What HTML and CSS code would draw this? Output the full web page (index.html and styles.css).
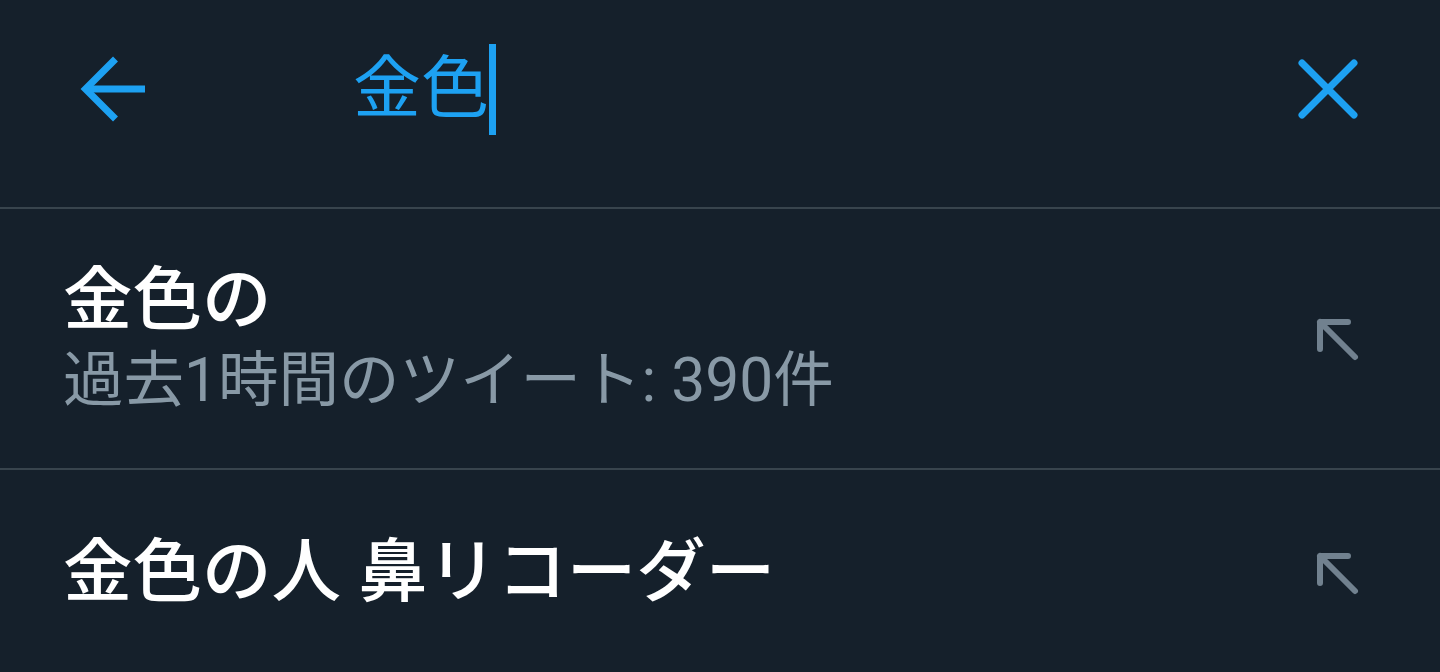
FILE: index.html
```html
<!DOCTYPE html>
<html lang="ja">
<head>
    <meta charset="UTF-8">
    <meta name="viewport" content="width=device-width, initial-scale=1.0">
    <title>検索</title>
    <link rel="stylesheet" href="styles.css">
</head>
<body>
    <header class="search-bar">
        <svg class="icon back" viewBox="0 0 72 72" aria-label="戻る">
            <path d="M9.5 36 H69" />
            <path d="M39.5 6 L9.5 36 L39.5 66" />
        </svg>
        <div class="query">金色<span class="caret"></span></div>
        <svg class="icon close" viewBox="0 0 72 72" aria-label="クリア">
            <path d="M10 10 L62 62 M62 10 L10 62" />
        </svg>
    </header>

    <ul class="suggestions">
        <li class="suggestion">
            <div class="text">
                <div class="title">金色の</div>
                <div class="meta">過去1時間のツイート: 390件</div>
            </div>
            <svg class="fill-in" viewBox="0 0 48 48">
                <path d="M8 34 V7 H36 M8 7 L43 42" />
            </svg>
        </li>
        <li class="suggestion">
            <div class="text">
                <div class="title">金色の人 鼻リコーダー</div>
            </div>
            <svg class="fill-in" viewBox="0 0 48 48">
                <path d="M8 34 V7 H36 M8 7 L43 42" />
            </svg>
        </li>
    </ul>
</body>
</html>
```

FILE: styles.css
```css
body {
    margin: 0;
    height: 100vh;
    overflow: hidden;
    background-color: #15202b;
    color: #ffffff;
    font-family: Roboto, "Noto Sans CJK JP", sans-serif;
}
.search-bar {
    display: flex;
    align-items: center;
    height: 178px;
    padding: 0 76px 29px 76px;
    border-bottom: 2px solid #38444d;
}
.icon {
    width: 72px;
    height: 72px;
    flex-shrink: 0;
    fill: none;
    stroke: #1da1f2;
    stroke-width: 7;
}
.back path {
    stroke-linecap: butt;
    stroke-linejoin: miter;
}
.close path {
    stroke-linecap: round;
}
.query {
    flex: 1;
    display: flex;
    align-items: center;
    margin-left: 205px;
    font-size: 68px;
    line-height: 1;
    color: #1da1f2;
}
.caret {
    display: inline-block;
    width: 7px;
    height: 91px;
    background-color: #1da1f2;
}
.suggestions {
    list-style: none;
    margin: 0;
    padding: 0;
}
.suggestion {
    display: flex;
    align-items: center;
    box-sizing: border-box;
    min-height: 208px;
    padding: 50px 80px 50px 63px;
    border-bottom: 2px solid #38444d;
}
.text {
    flex: 1;
}
.title {
    font-size: 69.5px;
    font-weight: 500;
    line-height: 84px;
}
.meta {
    font-size: 60.5px;
    line-height: 75px;
    color: #8899a6;
}
.fill-in {
    width: 48px;
    height: 48px;
    flex-shrink: 0;
    fill: none;
    stroke: #71818f;
    stroke-width: 6;
    stroke-linecap: round;
    stroke-linejoin: round;
}
```
